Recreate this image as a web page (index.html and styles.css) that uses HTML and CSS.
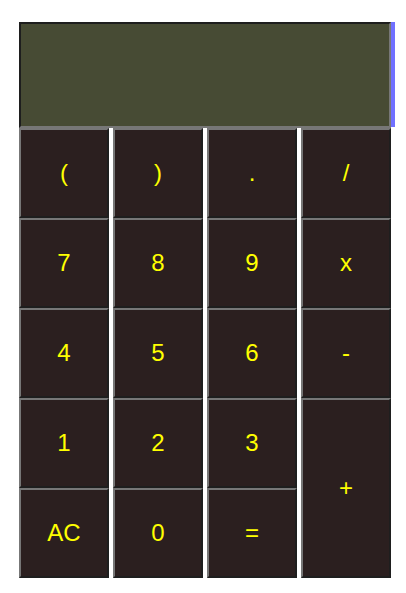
FILE: index.html
```html
<!DOCTYPE html>
<html>
<head>
<meta charset="utf-8">
<link rel="stylesheet" href="styles.css">
</head>
<body>
<div class="calc">
  <div class="top">
    <div class="display"></div>
    <div class="edge"></div>
  </div>
  <div class="keys">
    <button class="key">(</button>
    <button class="key">)</button>
    <button class="key">.</button>
    <button class="key">/</button>
    <button class="key">7</button>
    <button class="key">8</button>
    <button class="key">9</button>
    <button class="key">x</button>
    <button class="key">4</button>
    <button class="key">5</button>
    <button class="key">6</button>
    <button class="key">-</button>
    <button class="key">1</button>
    <button class="key">2</button>
    <button class="key">3</button>
    <button class="key plus">+</button>
    <button class="key">AC</button>
    <button class="key">0</button>
    <button class="key">=</button>
  </div>
</div>
</body>
</html>
```
FILE: styles.css
```css
html, body {
  margin: 0;
  padding: 0;
  background: #ffffff;
}
.calc {
  padding: 22px 0 0 19px;
  width: 376px;
}
.top {
  display: flex;
  align-items: stretch;
}
.display {
  box-sizing: border-box;
  width: 372px;
  height: 106px;
  background: #474b34;
  border-style: solid;
  border-width: 2px;
  border-color: #1e1e1e #777777 #777777 #1e1e1e;
}
.edge {
  width: 4px;
  height: 105px;
  background: #7070ff;
}
.keys {
  display: grid;
  grid-template-columns: repeat(4, 90px);
  grid-auto-rows: 90px;
  column-gap: 4px;
}
.key {
  box-sizing: border-box;
  margin: 0;
  padding: 0;
  background: #2b1f1f;
  color: #ffff00;
  font-family: "Liberation Sans", Arial, sans-serif;
  font-size: 24px;
  border-style: solid;
  border-width: 2px;
  border-color: #777777 #1e1e1e #1e1e1e #777777;
  display: flex;
  align-items: center;
  justify-content: center;
}
.plus {
  grid-column: 4;
  grid-row: 4 / span 2;
}
```
